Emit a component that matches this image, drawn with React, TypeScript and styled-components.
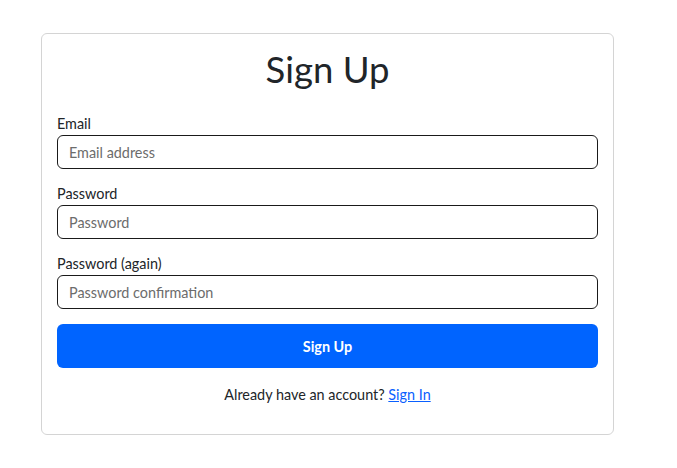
import React from "react";
import styled, { createGlobalStyle } from "styled-components";

const Global = createGlobalStyle`
  html, body { margin: 0; padding: 0; background: #fff; }
  body { font-family: Lato, "Noto Sans", sans-serif; color: #212529; }
  * { box-sizing: border-box; }
`;

const Page = styled.div`
  padding: 33px 0 0 41px;
`;

const Card = styled.form`
  width: 573px;
  height: 402px;
  border: 1px solid #d4d4d4;
  border-radius: 6px;
  padding: 14px 15px 0;
  display: flex;
  flex-direction: column;
`;

const Title = styled.h1`
  margin: 0 0 23px;
  font-size: 36.5px;
  line-height: 43px;
  font-weight: 400;
  text-align: center;
  color: #212529;
`;

const Field = styled.div`
  display: flex;
  flex-direction: column;
  margin-bottom: 15px;
`;

const Label = styled.label`
  font-size: 14.4px;
  line-height: 20px;
  margin-bottom: 1px;
  color: #212529;
`;

const Input = styled.input`
  height: 34px;
  border: 1px solid #1a1a1a;
  border-radius: 6px;
  padding: 0 11px;
  font-family: inherit;
  font-size: 14.4px;
  color: #212529;
  outline: none;
  &::placeholder { color: #6c6c6c; }
`;

const Button = styled.button`
  height: 44px;
  border: none;
  border-radius: 6px;
  background: #0064ff;
  color: #fff;
  font-family: inherit;
  font-size: 14.4px;
  font-weight: 700;
  cursor: pointer;
`;

const Footer = styled.p`
  margin: 17px 0 0;
  font-size: 14.4px;
  line-height: 20px;
  text-align: center;
  color: #212529;
`;

const Link = styled.a`
  color: #0a60ff;
  text-decoration: underline;
`;

export default function App() {
  return (
    <Page>
      <Global />
      <Card onSubmit={(e) => e.preventDefault()}>
        <Title>Sign Up</Title>
        <Field>
          <Label>Email</Label>
          <Input type="email" placeholder="Email address" />
        </Field>
        <Field>
          <Label>Password</Label>
          <Input type="password" placeholder="Password" />
        </Field>
        <Field>
          <Label>Password (again)</Label>
          <Input type="password" placeholder="Password confirmation" />
        </Field>
        <Button type="submit">Sign Up</Button>
        <Footer>
          Already have an account? <Link href="#">Sign In</Link>
        </Footer>
      </Card>
    </Page>
  );
}
